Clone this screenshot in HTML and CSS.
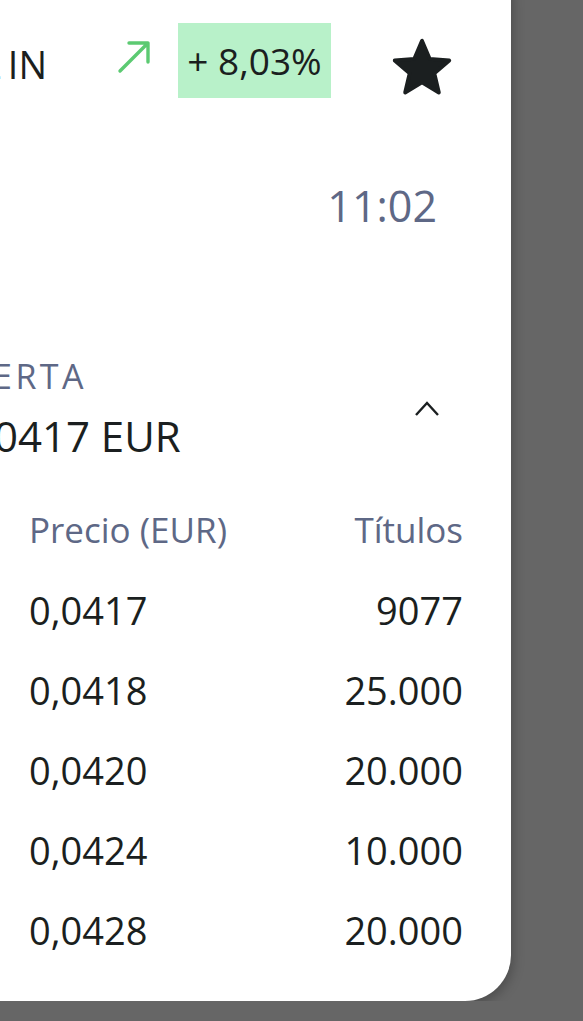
FILE: index.html
```html
<!DOCTYPE html>
<html lang="es">
<head>
    <meta charset="UTF-8">
    <meta name="viewport" content="width=device-width, initial-scale=1.0">
    <title>Detalle de valor</title>
    <link rel="stylesheet" href="styles.css">
</head>
<body>
    <div class="card">
        <div class="quote-header">
            <div class="stock-name">ALL IN</div>
            <svg class="trend-icon" width="36" height="36" viewBox="0 0 36 36">
                <path d="M4 31 L32 3 M13 3 H32 V22" fill="none" stroke="#5cca72" stroke-width="3.4" stroke-linecap="round" stroke-linejoin="round"/>
            </svg>
            <div class="change-badge">+ 8,03%</div>
            <svg class="fav-icon" width="60" height="60" viewBox="1 1 22 22">
                <path d="M12 17.27L18.18 21l-1.64-7.03L22 9.24l-7.19-.61L12 2 9.19 8.63 2 9.24l5.46 4.73L5.82 21z" fill="#1b1f20" stroke="#1b1f20" stroke-width="1.4" stroke-linejoin="round"/>
            </svg>
        </div>

        <div class="quote-time">11:02</div>

        <div class="offer-row">
            <div class="offer-info">
                <div class="offer-label">OFERTA</div>
                <div class="offer-value">0,0417 EUR</div>
            </div>
            <svg class="toggle-icon" width="26" height="18" viewBox="0 0 26 18">
                <path d="M2 15 L13 3 L24 15" fill="none" stroke="#1b1f20" stroke-width="2.4"/>
            </svg>
        </div>

        <div class="book">
            <div class="book-head">
                <span>Precio (EUR)</span>
                <span>Títulos</span>
            </div>
            <div class="book-row"><span>0,0417</span><span>9077</span></div>
            <div class="book-row"><span>0,0418</span><span>25.000</span></div>
            <div class="book-row"><span>0,0420</span><span>20.000</span></div>
            <div class="book-row"><span>0,0424</span><span>10.000</span></div>
            <div class="book-row"><span>0,0428</span><span>20.000</span></div>
        </div>
    </div>
</body>
</html>
```

FILE: styles.css
```css
body {
    margin: 0;
    background-color: #666666;
    font-family: "Open Sans", "Noto Sans", Arial, sans-serif;
    color: #1b1f20;
    overflow: hidden;
}
.card {
    width: 651px;
    margin: -45px 0 0 -140px;
    padding: 68px 0 31px 0;
    box-sizing: border-box;
    background: #fff;
    border-radius: 46px;
    box-shadow: 2px 4px 12px rgba(0,0,0,0.25);
}
.quote-header {
    display: flex;
    align-items: flex-start;
    height: 75px;
}
.stock-name {
    width: 187px;
    margin-top: 15px;
    font-size: 38px;
    text-align: right;
    word-spacing: -3px;
    white-space: nowrap;
    overflow: hidden;
}
.trend-icon {
    margin: 17px 0 0 69px;
}
.change-badge {
    display: flex;
    align-items: center;
    justify-content: center;
    width: 153px;
    height: 75px;
    margin-left: 26px;
    background-color: #b8f1c9;
    font-size: 37px;
    line-height: 1;
}
.fav-icon {
    margin: 15px 0 0 61px;
}
.quote-time {
    margin-top: 78px;
    padding-right: 74px;
    text-align: right;
    font-size: 43px;
    line-height: 60px;
    color: #5e6886;
}
.offer-row {
    display: flex;
    justify-content: space-between;
    align-items: flex-start;
    margin-top: 120px;
}
.offer-info {
    margin-left: 99px;
}
.offer-label {
    margin-left: -17px;
    font-size: 34px;
    line-height: 40px;
    letter-spacing: 3.5px;
    color: #5e6886;
}
.offer-value {
    margin-top: 15px;
    font-size: 42px;
    line-height: 50px;
}
.toggle-icon {
    margin: 44px 71px 0 0;
}
.book {
    margin-top: 39px;
    padding: 0 48px 0 169px;
}
.book-head, .book-row {
    display: flex;
    justify-content: space-between;
}
.book-head {
    font-size: 35px;
    line-height: 60px;
    color: #5e6886;
    margin-bottom: 10px;
}
.book-row {
    font-size: 38px;
    line-height: 80px;
}
```
